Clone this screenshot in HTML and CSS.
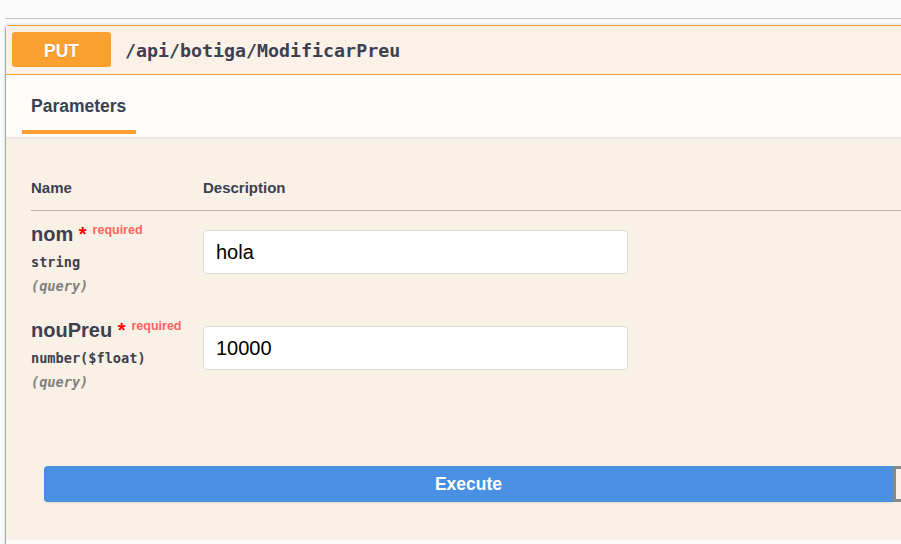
FILE: index.html
```html
<!DOCTYPE html>
<html>
<head>
<meta charset="utf-8">
<link rel="stylesheet" href="styles.css">
</head>
<body>
<div class="topline"></div>
<div class="opblock">
  <div class="summary">
    <span class="method">PUT</span>
    <span class="path">/api/botiga/ModificarPreu</span>
  </div>
  <div class="tab-header">
    <div class="tab">Parameters</div>
  </div>
  <div class="section">
    <div class="params">
      <div class="row head">
        <div class="th">Name</div>
        <div class="th">Description</div>
      </div>
      <div class="row">
        <div class="col-name">
          <div class="pname">nom<span class="star">&nbsp;*</span><span class="req">required</span></div>
          <div class="ptype">string</div>
          <div class="pin">(query)</div>
        </div>
        <div class="col-desc">
          <input class="field" type="text" value="hola">
        </div>
      </div>
      <div class="row">
        <div class="col-name">
          <div class="pname">nouPreu<span class="star">&nbsp;*</span><span class="req">required</span></div>
          <div class="ptype">number($float)</div>
          <div class="pin">(query)</div>
        </div>
        <div class="col-desc">
          <input class="field" type="text" value="10000">
        </div>
      </div>
    </div>
    <div class="btn-group">
      <button class="btn execute">Execute</button>
      <button class="btn clear" aria-label="Clear"></button>
    </div>
  </div>
  <div class="tab-header resp"></div>
</div>
</body>
</html>
```

FILE: styles.css
```css
html, body {
  margin: 0;
  padding: 0;
  background: #fafafa;
  overflow: hidden;
  font-family: "Liberation Sans", Arial, sans-serif;
  color: #3b4151;
}

.topline {
  height: 18px;
  margin-left: 5px;
  border-bottom: 1px solid #c4c4c4;
}

.opblock {
  margin: 6px 0 0 5px;
  width: 1800px;
  border: 1px solid #fca130;
  border-radius: 4px;
  background: #faf1e6;
  box-shadow: 0 0 3px rgba(0, 0, 0, 0.19);
}

.summary {
  display: flex;
  align-items: center;
  padding: 6px 6px 7px;
  border-bottom: 1px solid #fca130;
  background: #fcf1e6;
}

.method {
  width: 99px;
  height: 33px;
  padding-top: 2px;
  line-height: 35px;
  text-align: center;
  background: #fca130;
  border-radius: 3px;
  color: #fff;
  font-weight: bold;
  font-size: 17.5px;
  text-shadow: 0 1px 0 rgba(0, 0, 0, 0.1);
}

.path {
  margin-left: 14px;
  padding-top: 2px;
  font-family: "DejaVu Sans Mono", monospace;
  font-weight: bold;
  font-size: 18.3px;
  color: #3b4151;
}

.tab-header {
  box-sizing: border-box;
  height: 62px;
  padding: 21px 0 0 16px;
  background: #fefcfa;
  box-shadow: 0 1px 2px rgba(0, 0, 0, 0.1);
  display: flex;
  align-items: flex-start;
}

.tab {
  padding: 0 10px 14px 9px;
  line-height: 20px;
  font-size: 17.5px;
  font-weight: bold;
  border-bottom: 4px solid #fca130;
}

.section {
  padding-bottom: 38px;
}

.params {
  padding: 29px 25px 0;
}

.row {
  display: grid;
  grid-template-columns: 172px 1fr;
}

.row.head {
  border-bottom: 1px solid #b9b4af;
}

.th {
  padding: 12px 0;
  line-height: 20px;
  font-size: 15px;
  font-weight: bold;
}

.col-name {
  padding: 12px 0 11px;
}

.pname {
  height: 22px;
  font-size: 20px;
  font-weight: bold;
  line-height: 22px;
  white-space: nowrap;
}

.star {
  color: #f00;
  line-height: 1;
}

.req {
  position: relative;
  top: -7px;
  padding-left: 6px;
  font-size: 12.5px;
  line-height: 1;
  color: #ff6262;
}

.ptype {
  height: 20px;
  margin: 7px 0 4px;
  font-family: "DejaVu Sans Mono", monospace;
  font-weight: bold;
  font-size: 13.6px;
  line-height: 20px;
  color: #3b4151;
}

.pin {
  height: 20px;
  font-family: "DejaVu Sans Mono", monospace;
  font-weight: bold;
  font-style: italic;
  font-size: 13.6px;
  line-height: 20px;
  color: #808080;
}

.col-desc {
  padding-top: 19px;
}

.field {
  display: block;
  box-sizing: border-box;
  width: 425px;
  height: 44px;
  margin: 0;
  padding: 0 12px;
  border: 1px solid #d9d9d9;
  border-radius: 4px;
  background: #fff;
  font-family: "Liberation Sans", Arial, sans-serif;
  font-size: 20px;
  color: #000;
  outline: none;
}

.btn-group {
  display: flex;
  padding: 63px 38px 0;
}

.btn {
  flex: 0 0 849px;
  box-sizing: border-box;
  height: 36px;
  margin: 0;
  font-family: "Liberation Sans", Arial, sans-serif;
  font-size: 17.5px;
  font-weight: bold;
  cursor: pointer;
}

.execute {
  background: #4990e2;
  color: #fff;
  border: none;
  border-radius: 4px 0 0 4px;
  box-shadow: 0 1px 2px rgba(0, 0, 0, 0.1);
}

.clear {
  background: transparent;
  border: 3px solid #888;
  border-radius: 0 4px 4px 0;
}

.tab-header.resp {
  box-shadow: none;
}
```
